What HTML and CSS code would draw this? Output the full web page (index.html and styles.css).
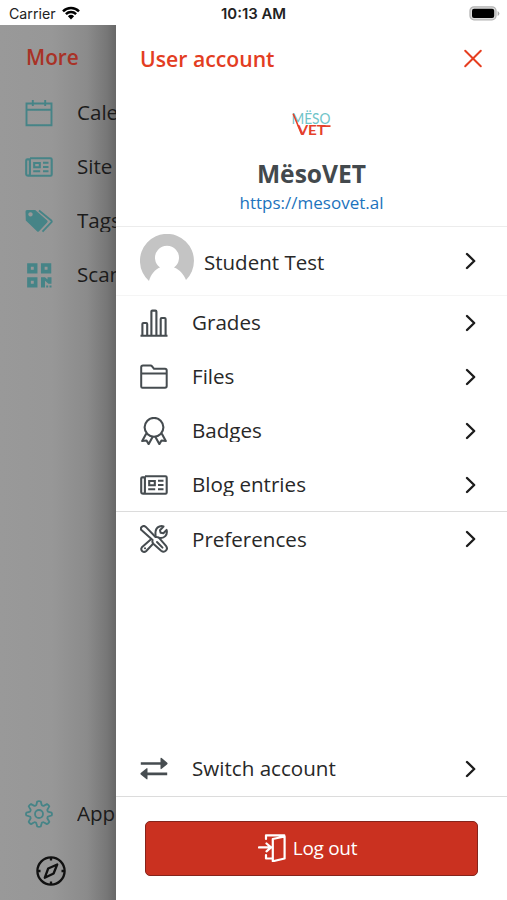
FILE: index.html
```html
<!DOCTYPE html>
<html lang="en">
<head>
<meta charset="utf-8">
<title>User account</title>
<link rel="stylesheet" href="styles.css">
</head>
<body>
<svg class="defs" width="0" height="0" aria-hidden="true">
  <symbol id="news" viewBox="0 0 28 28"><path d="M5 5.200h20.500q1.200 0 1.200 1.200v15.200q0 1.200-1.200 1.200H3.200Q1.200 22.800 1.200 20.800V7.600q0-1.200 1.200-1.200H4.800M4.900 5.200V20.800q0 1.800-1.600 1.800M9.200 10h5.600v4.300H9.200zM8.200 18.300h7M18 9.800h5.500M18 14h5.500M18 18.300h5.500" fill="none" stroke="currentColor" stroke-width="2.100"/></symbol>
  <symbol id="chevron" viewBox="0 0 12 18"><path d="M2 2l7.200 7L2 16" fill="none" stroke="currentColor" stroke-width="2.400" stroke-linecap="round" stroke-linejoin="round"/></symbol>
</svg>
<header class="status">
  <div class="carrier">Carrier
    <svg width="18" height="14" viewBox="0 0 18 14"><path d="M1 5.300a11.500 11.500 0 0 1 16 0M3.900 8.200a7.300 7.300 0 0 1 10.200 0" fill="none" stroke="#000" stroke-width="2.500"/><path d="M5.900 10.300a4.500 4.500 0 0 1 6.200 0L9 13.500z"/></svg>
  </div>
  <div class="time">10:13 AM</div>
  <svg class="battery" width="31" height="15" viewBox="0 0 31 15"><rect x="1" y=".8" width="26" height="13" rx="4" fill="#ddd" stroke="#b4b4b4" stroke-width="1.300"/><rect x="3" y="2.700" width="22.200" height="9.300" rx="2" fill="#000"/><path d="M28.600 5v5q1.800-1 1.800-2.500T28.600 5z" fill="#aaa"/></svg>
</header>
<div class="screen">
  <aside class="behind">
    <h2 class="more">More</h2>
    <div class="row"><svg class="icon" viewBox="0 0 28 28"><path d="M1.500 4.500h25v21.800h-25zM1.500 10.700h25M7.800 1v6M20.200 1v6" fill="none" stroke="currentColor" stroke-width="1.900"/></svg><span class="label">Calendar</span></div>
    <div class="row"><svg class="icon"><use href="#news"/></svg><span class="label">Site blog</span></div>
    <div class="row"><svg class="icon" viewBox="0 0 28 28"><path fill-rule="evenodd" d="M.5 4.500Q.5 3 2 3h8.200l12 10.500q1 1 0 2L14 24.200q-1 1-2 0L.8 13.500zM5.500 5.200a2.200 2.200 0 1 0 .01 0z" fill="currentColor"/><path d="M14 3.500l12.500 10.200q.6.800 0 1.500L17.500 24.600" fill="none" stroke="currentColor" stroke-width="1.800"/></svg><span class="label">Tags</span></div>
    <div class="row"><svg class="icon" viewBox="0 0 28 28"><path d="M4 4h6.600v6.600H4zM17.800 4h6.600v6.600h-6.600zM4 18h6.600v6.600H4z" fill="none" stroke="currentColor" stroke-width="3.700"/><path d="M16 16.200h4l2.500 2.300v-2.300h4v6.500h-3l-3.500-3v6.700h-4zM21.200 24.400h2v2h-2zM24.500 24.400h2v2h-2z" fill="currentColor"/></svg><span class="label">Scan QR code</span></div>
    <div class="row app"><svg class="icon" viewBox="0 0 28 28"><g fill="none" stroke="currentColor" stroke-width="1.800" stroke-linejoin="round"><path d="M12.200 1.500q1.800-.8 3.600 0l.8 3.300q.2.800 1 .9.800.3 1.500-.1l2.900-1.600q1.700.8 2.300 2.400l-1.700 2.800q-.5.800-.1 1.500.2.900 1.100 1.100l3 .8q.8 1.400 0 2.900l-3 .8q-.9.200-1.100 1-.4.800.1 1.500l1.700 3q-.7 1.700-2.400 2.300L19.100 22.500q-.7-.5-1.500-.2-.8.200-1 1.100l-.8 3.100q-1.800.8-3.600 0l-.8-3.100q-.2-.9-1-1.100-.8-.3-1.500.2L6.100 24.100q-1.700-.7-2.400-2.300l1.700-3q.5-.7.100-1.500-.2-.8-1.100-1l-3-.8q-.8-1.500 0-2.900l3-.8q.9-.2 1.100-1.100.4-.7-.1-1.500L3.700 6.400Q4.400 4.800 6 4l2.900 1.600q.7.400 1.500.1.800-.1 1-.9z"/><circle cx="14" cy="14" r="4"/></g></svg><span class="label">App settings</span></div>
    <nav class="tab"><svg width="32" height="32" viewBox="0 0 32 32" fill="none" stroke="#111" stroke-width="2.300"><circle cx="16" cy="16" r="13.600"/><path d="M22.200 9.500l-3.600 9-8.800 4.200 3.400-9.200zM16 2.500v3M16 26.500v3M2.500 16h3M26.500 16h3" stroke-linejoin="round"/></svg></nav>
  </aside>
  <main class="panel">
    <div class="head"><h1>User account</h1><svg width="20" height="20" viewBox="0 0 20 20"><path d="M2.200 1.700l15.600 15.600M17.800 1.700L2.200 17.300" stroke="#e63e20" stroke-width="2" stroke-linecap="round"/></svg></div>
    <section class="site">
      <svg class="logo" width="42" height="30" viewBox="0 0 42 30"><text class="logo-top" x=".5" y="15.800" textLength="39" lengthAdjust="spacingAndGlyphs">MËSO</text><text class="logo-bottom" x="6.500" y="27.300" textLength="28.500" lengthAdjust="spacingAndGlyphs">VET</text><path d="M2.200 5.800L10.800 26.800M30 18.100h9.500" stroke="#e5402a" stroke-width="1.600"/></svg>
      <div class="name">MësoVET</div>
      <a class="url">https://mesovet.al</a>
    </section>
    <div class="user"><svg class="avatar" width="54" height="54" viewBox="0 0 54 54"><path d="M9 47A27 27 0 1 1 46 46C43.500 40 39.500 35.500 34 33.500A12 12 0 1 0 20 33.500C15 35.500 11 40 9 47z" fill="#c4c4c4"/></svg><span class="student">Student Test</span><svg class="chev"><use href="#chevron"/></svg></div>
    <div class="group">
      <div class="row"><svg class="icon" viewBox="0 0 28 28"><path d="M.5 26.700h27M2.400 26V15q0-1 1-1h2.800q1 0 1 1v11M11.400 26V2.600q0-1 1-1h3q1 0 1 1V26M20.700 26V10q0-1 1-1h2.900q1 0 1 1v16" fill="none" stroke="currentColor" stroke-width="2.100"/></svg><span class="label">Grades</span><svg class="chev"><use href="#chevron"/></svg></div>
      <div class="row"><svg class="icon" viewBox="0 0 28 28"><path d="M1.200 23.500V4.200Q1.200 2.500 3 2.500h7.500q1 0 1.600.8L14 5.800h11q1.700 0 1.700 1.700V23q0 1.700-1.700 1.700H2.500q-1.300 0-1.300-1.200zM1.200 10.500h25.500" fill="none" stroke="currentColor" stroke-width="2"/></svg><span class="label">Files</span><svg class="chev"><use href="#chevron"/></svg></div>
      <div class="row"><svg class="icon" viewBox="0 0 28 28"><g fill="none" stroke="currentColor" stroke-width="2.100" stroke-linejoin="round"><circle cx="14" cy="10.300" r="9.400"/><path d="M6.300 16.500L2.200 24l4.300-.5 2.200 3.600 4-7.300M21.700 16.500l4.100 7.500-4.300-.5-2.200 3.600-4-7.300"/></g></svg><span class="label">Badges</span><svg class="chev"><use href="#chevron"/></svg></div>
      <div class="row"><svg class="icon"><use href="#news"/></svg><span class="label">Blog entries</span><svg class="chev"><use href="#chevron"/></svg></div>
    </div>
    <div class="row prefs"><svg class="icon" viewBox="0 0 28 28"><g fill="#fff" stroke="currentColor" stroke-width="2" stroke-linejoin="round"><path d="M1.900 22.300L15.600 10.200Q14.600 3.300 19.500 1.500q2.200-.8 4 0L20 5.200l.6 2.600 2.800.4 3.200-3.300q1 3.800-1.300 6.200-2.600 2.600-6.400 1.500L6 26.200q-1.800 1.400-3.700 0-1.900-2-.4-3.900z"/><path d="M1.600 2Q3.800 0 5.800 1.900L15.500 12q2.400-.5 4 1.300l6.500 7.600q2 2.600-.1 4.700t-4.800.1L13.600 19q-1.800-1.700-1-4L1.700 5.300Q0 3.700 1.600 2z"/><path d="M17 17l5.500 5.600M5 23.200l.1.100" stroke-linecap="round"/></g></svg><span class="label">Preferences</span><svg class="chev"><use href="#chevron"/></svg></div>
    <div class="row switch"><svg class="icon" viewBox="0 0 28 28"><path d="M.8 8.500H22M27.200 18.800H6" stroke="currentColor" stroke-width="2.700"/><path d="M20.500 3.700q0-1.500 1.200-.6l5.300 4.400q1.200 1 0 2l-5.300 4.300q-1.200.9-1.200-.6zM7.500 14q0-1.500-1.200-.6L1 17.800q-1.200 1 0 2l5.300 4.300q1.200.9 1.200-.6z" fill="currentColor"/></svg><span class="label">Switch account</span><svg class="chev"><use href="#chevron"/></svg></div>
    <footer><button class="logout"><svg width="28" height="28" viewBox="0 0 28 28" fill="none" stroke="#fff" stroke-width="2.200"><path d="M8 5V1.300h18.300V4M8 21v3.500h6M26.600 2.500v22l-11.800 2.700V5zM1 13.400h11M8.500 9.500l4.500 3.900-4.500 3.900" stroke-linejoin="round" stroke-linecap="round"/></svg><span>Log out</span></button></footer>
  </main>
</div>
</body>
</html>
```

FILE: styles.css
```css
* { box-sizing: border-box; }
body { margin: 0; width: 507px; height: 900px; overflow: hidden; display: flex; flex-direction: column; background: #fff; color: #282828; font-family: "Open Sans", "Noto Sans", sans-serif; font-size: 20.6px; }
h1, h2 { margin: 0; font-size: 21.2px; font-weight: 600; line-height: 30px; }
svg { display: block; flex: none; }
.defs { position: absolute; }
.status { height: 25px; flex: none; display: grid; grid-template-columns: 1fr auto 1fr; align-items: center; padding: 2px 7px 0 9px; font: 14.2px/20px Inter, sans-serif; color: #222; }
.carrier { display: flex; align-items: center; gap: 6px; }
.carrier svg { margin-top: -2px; }
.time { font-weight: 600; font-size: 14.9px; margin-right: 2px; }
.battery { justify-self: end; }
.screen { flex: 1; min-height: 0; display: flex; }
.behind { width: 116px; flex: none; overflow: hidden; display: flex; flex-direction: column; background: linear-gradient(90deg, #999 0, #979797 45%, #8b8b8b 75%, #777 92%, #686868 100%); }
.more { margin: 17px 0 14px 26px; font-size: 20.8px; color: #a93226; }
.row { height: 54px; flex: none; display: flex; align-items: center; padding: 0 30px 0 24px; }
.behind .row { width: 260px; padding-left: 25px; }
.icon { width: 28px; height: 28px; margin-right: 24px; color: #464c50; }
.behind .icon { color: #468487; }
.label { flex: 1; overflow: hidden; padding-bottom: 2px; line-height: 20px; white-space: nowrap; color: #282828; }
.prefs .label { padding: 1px 0; }
.behind .label { color: #1b1b1b; }
.app { margin-top: auto; }
.tab { height: 59px; flex: none; padding: 14px 0 0 35px; }
.panel { flex: 1; min-width: 0; display: flex; flex-direction: column; background: #fff; }
.head { height: 67px; flex: none; display: flex; justify-content: space-between; align-items: center; padding: 0 24px; color: #e33d22; }
.site { height: 135px; flex: none; display: flex; flex-direction: column; align-items: center; padding-top: 16px; border-bottom: 1px solid #ececec; }
.logo-top { font: 400 15px Lato, sans-serif; fill: #6fc4c8; }
.logo-bottom { font: 700 13.5px Lato, sans-serif; fill: #e5402a; }
.name { margin-top: 19px; font-size: 24.6px; font-weight: 700; line-height: 34px; color: #43494d; }
.url { font-size: 17px; line-height: 24px; color: #1c73bd; }
.user { height: 69px; flex: none; display: flex; align-items: center; padding: 0 30px 0 24px; border-bottom: 1px solid #f5f5f5; }
.student { flex: 1; margin-left: 10px; padding-top: 2px; line-height: 28px; font-size: 20.5px; }
.chev { width: 12px; height: 18px; color: #1c1c1c; }
.group { flex: none; height: 216px; border-bottom: 1px solid #dcdcdc; }
.switch { margin-top: auto; }
footer { height: 104px; flex: none; padding: 24px 29px; border-top: 1px solid #dcdcdc; }
.logout { width: 333px; height: 55px; display: flex; justify-content: center; align-items: center; gap: 7px; border: 1px solid #85241b; border-radius: 5px; background: #ca3120; color: #fff; font: 19px/26px "Open Sans", sans-serif; letter-spacing: -.3px; padding: 0 8px 1px 0; }
```
